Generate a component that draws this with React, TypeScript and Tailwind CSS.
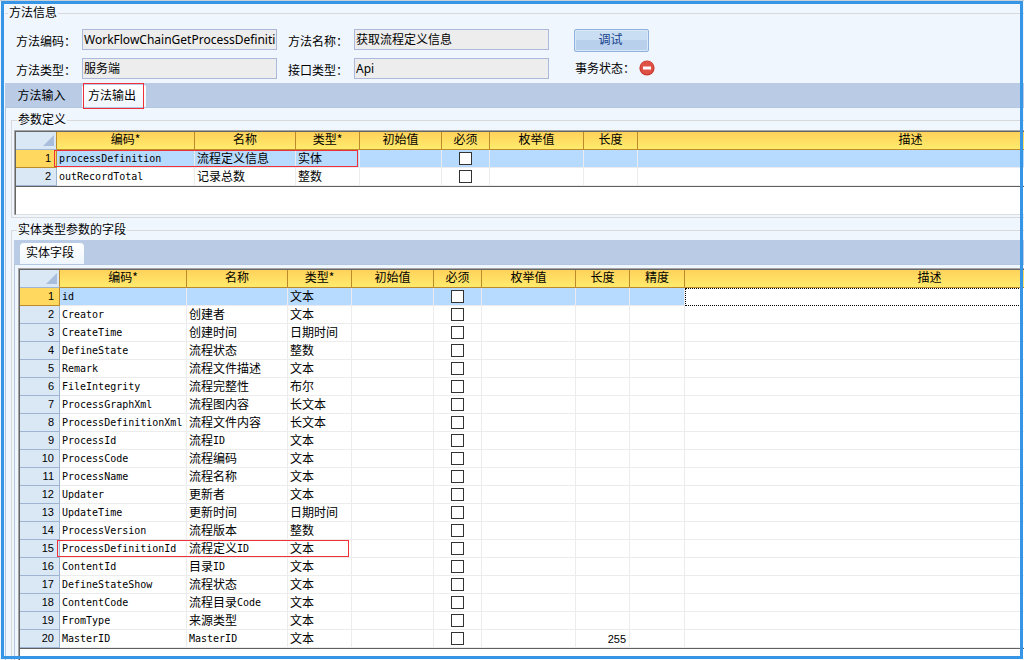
import type { ReactNode } from "react";

interface Row {
  cells: string[];
  marked?: boolean;
}

const paramHeaders = ["编码*", "名称", "类型*", "初始值", "必须", "枚举值", "长度", "描述"];
const paramWidths = ["w-[41px]", "w-[138px]", "w-[101px]", "w-[64px]", "w-[82px]", "w-[48px]", "w-[94px]", "w-[54px]", "w-[546px]"];
const paramRows: Row[] = [
  { cells: ["processDefinition", "流程定义信息", "实体", "", "", "", "", ""], marked: true },
  { cells: ["outRecordTotal", "记录总数", "整数", "", "", "", "", ""] },
];

const fieldHeaders = ["编码*", "名称", "类型*", "初始值", "必须", "枚举值", "长度", "精度", "描述"];
const fieldWidths = ["w-[40px]", "w-[127px]", "w-[101px]", "w-[64px]", "w-[82px]", "w-[48px]", "w-[94px]", "w-[54px]", "w-[55px]", "w-[490px]"];
const fields: [string, string, string, string?][] = [
  ["id", "", "文本"],
  ["Creator", "创建者", "文本"],
  ["CreateTime", "创建时间", "日期时间"],
  ["DefineState", "流程状态", "整数"],
  ["Remark", "流程文件描述", "文本"],
  ["FileIntegrity", "流程完整性", "布尔"],
  ["ProcessGraphXml", "流程图内容", "长文本"],
  ["ProcessDefinitionXml", "流程文件内容", "长文本"],
  ["ProcessId", "流程ID", "文本"],
  ["ProcessCode", "流程编码", "文本"],
  ["ProcessName", "流程名称", "文本"],
  ["Updater", "更新者", "文本"],
  ["UpdateTime", "更新时间", "日期时间"],
  ["ProcessVersion", "流程版本", "整数"],
  ["ProcessDefinitionId", "流程定义ID", "文本"],
  ["ContentId", "目录ID", "文本"],
  ["DefineStateShow", "流程状态", "文本"],
  ["ContentCode", "流程目录Code", "文本"],
  ["FromType", "来源类型", "文本"],
  ["MasterID", "MasterID", "文本", "255"],
];
const fieldRows: Row[] = fields.map(([code, name, type, length]) => ({
  cells: [code, name, type, "", "", "", length ?? "", "", ""],
  marked: code === "ProcessDefinitionId",
}));

/* Latin runs are set in a half-width face beside the full-width Chinese. */
function Mixed({ text }: { text: string }) {
  return (
    <>
      {text.split(/([A-Za-z0-9]+)/).filter(Boolean).map((part, i) =>
        /^[A-Za-z0-9]/.test(part) ? (
          <span key={i} className="align-[1px] font-['DejaVu_Sans_Mono',monospace] text-[10px] leading-3">{part}</span>
        ) : (
          <span key={i}>{part}</span>
        ),
      )}
    </>
  );
}

interface GridProps {
  label: string;
  headers: string[];
  widths: string[];
  rows: Row[];
  markClass: string;
  focusLast?: boolean;
}

function DataGrid({ label, headers, widths, rows, markClass, focusLast }: GridProps) {
  return (
    <table aria-label={label} className="w-max table-fixed border-separate border-spacing-0 border-b border-[#606060] text-xs leading-4">
      <colgroup>
        {widths.map((w, i) => <col key={i} className={w} />)}
      </colgroup>
      <thead>
        <tr className="h-[18px]">
          <th className="border-r border-b border-r-[#bf8a2c] border-b-[#9fb4d0] bg-[#dae7f5] p-0">
            <svg className="mr-[2px] ml-auto h-[11px] w-[11px]" viewBox="0 0 11 11" aria-hidden="true">
              <path d="M11 0V11H0Z" fill="#a9bedd" />
            </svg>
          </th>
          {headers.map((h) => (
            <th key={h} className="border-r border-b border-[#bf8a2c] bg-linear-to-b from-[#ffd25a] to-[#ffeb6c] p-0 text-center font-normal">
              <span className="block h-[17px] leading-[14px]">{h}</span>
            </th>
          ))}
        </tr>
      </thead>
      <tbody>
        {rows.map((row, r) => (
          <tr key={r} className="h-[18px]">
            <th
              scope="row"
              className={
                r === 0
                  ? "border-r border-b border-[#bf8a2c] bg-[#ffd95f] p-0 pr-[5px] text-right font-normal"
                  : "border-r border-b border-[#9fb4d0] bg-[#dae7f5] p-0 pr-[5px] text-right font-normal"
              }
            >
              <span className="block h-[17px] font-['Liberation_Sans',sans-serif] text-[11px] leading-[17px]">{r + 1}</span>
            </th>
            {row.cells.map((cell, i) => {
              const focused = focusLast && r === 0 && i === row.cells.length - 1;
              return (
                <td
                  key={i}
                  className={
                    focused
                      ? "border border-dotted border-black bg-white p-0"
                      : r === 0
                        ? "relative border-r border-b border-[#ececf0] bg-[#b7daff] p-0"
                        : "relative border-r border-b border-[#ececec] bg-white p-0"
                  }
                >
                  {row.marked && i === 0 && <span className={markClass} />}
                  {headers[i] === "必须" ? (
                    <input
                      type="checkbox"
                      aria-label={`${row.cells[0]} 必须`}
                      className="mx-auto block h-[13px] w-[13px] appearance-none border border-[#333] bg-white"
                    />
                  ) : headers[i] === "长度" ? (
                    <span className="block h-4 pr-[3px] text-right font-['Liberation_Sans',sans-serif] text-[11px] whitespace-nowrap">
                      {cell}
                    </span>
                  ) : (
                    <span className="block h-4 pl-[2px] leading-[14px] whitespace-nowrap">
                      <Mixed text={cell} />
                    </span>
                  )}
                </td>
              );
            })}
          </tr>
        ))}
      </tbody>
    </table>
  );
}

function Field({ id, label, value }: { id: string; label: string; value: string }) {
  return (
    <div className="flex h-[21px] items-center">
      <label htmlFor={id} className="w-[66px] shrink-0 pt-[3px] whitespace-nowrap">{label}</label>
      <input
        id={id}
        readOnly
        defaultValue={value}
        className="h-[21px] w-[195px] border border-[#adb9db] bg-[#ededed] px-px pb-px font-['Noto_Sans','Noto_Sans_CJK_SC',sans-serif] text-xs"
      />
    </div>
  );
}

function Group({ title, className, legendClass, children }: { title: string; className: string; legendClass: string; children: ReactNode }) {
  return (
    <fieldset className={className}>
      <legend className={legendClass}>{title}</legend>
      {children}
    </fieldset>
  );
}

export default function App() {
  return (
    <main
      lang="zh-CN"
      className="relative flex h-screen flex-col overflow-hidden bg-[#eff6fe] pt-[5px] pl-[5px] font-['Noto_Sans_CJK_SC',sans-serif] text-xs leading-4 text-black"
    >
      <Group title="方法信息" className="min-w-0 shrink-0 border-t border-[#d9d9dc] pb-1" legendClass="ml-[3px] h-4 px-px leading-[14px]">
        <div className="flex pt-2 pl-[11px]">
          <div className="flex flex-col gap-2">
            <Field id="method-code" label="方法编码：" value="WorkFlowChainGetProcessDefinition" />
            <Field id="method-type" label="方法类型：" value="服务端" />
          </div>
          <div className="ml-[11px] flex flex-col gap-2">
            <Field id="method-name" label="方法名称：" value="获取流程定义信息" />
            <Field id="api-type" label="接口类型：" value="Api" />
          </div>
          <div className="-mb-2 ml-[25px] flex flex-col items-start gap-2">
            <button
              type="button"
              className="h-[23px] w-[75px] rounded-xs border border-[#8fb1dc] bg-linear-to-b from-[#cadef3] from-50% to-[#b9d0ec] to-50% pr-[2px] pb-[3px] text-[#15428b] shadow-[inset_0_0_0_1px_#d8e8f8]"
            >
              调试
            </button>
            <div className="flex h-4 items-center gap-1">
              <span className="w-[61px] pl-px whitespace-nowrap">事务状态：</span>
              <svg className="h-4 w-4" viewBox="0 0 16 16" role="img" aria-label="未启用">
                <circle cx="8" cy="8" r="7.6" fill="#c9392d" />
                <circle cx="8" cy="7.6" r="6.6" fill="#df5145" />
                <rect x="4" y="6.5" width="8" height="3" fill="#fff" />
              </svg>
            </div>
          </div>
        </div>
      </Group>

      <nav className="flex h-[25px] shrink-0 border-b border-[#b3c8e0] bg-[#bacce5]">
        <button type="button" className="w-[77px] pr-1 pb-px text-center">方法输入</button>
        <button type="button" className="relative mt-[2px] w-[64px] rounded-t-xs bg-linear-to-b from-white to-[#eff6fe] pr-1 pb-[3px] text-center">
          方法输出
          <span className="absolute -top-[2px] left-[1px] h-[26px] w-[61px] border border-[#f03038]" />
        </button>
      </nav>

      <section className="flex min-h-0 flex-1 flex-col border-l border-[#b3c8e0] pt-1 pl-[5px]">
        <Group
          title="参数定义"
          className="min-w-0 shrink-0 border-y border-l border-[#d9d9dc] pt-[2px] pb-[2px] pl-[2px]"
          legendClass="ml-[3px] h-4 px-px leading-[14px]"
        >
          <div className="border-t border-l border-[#a6a6a6]">
            <div className="h-[84px] overflow-hidden border-t border-b border-l border-t-[#666] border-b-[#dedede] border-l-[#666] bg-white">
              <DataGrid
                label="参数定义"
                headers={paramHeaders}
                widths={paramWidths}
                rows={paramRows}
                markClass="absolute top-0 -left-[3px] z-10 h-[17px] w-[304px] border border-[#f03038]"
              />
            </div>
          </div>
        </Group>

        <Group
          title="实体类型参数的字段"
          className="mt-1 flex min-h-0 min-w-0 flex-1 flex-col border-t border-l border-[#d9d9dc] pt-[2px] pl-[2px]"
          legendClass="ml-[3px] h-4 px-px leading-[14px]"
        >
          <nav className="flex h-[25px] shrink-0 border-b border-[#b3c8e0] bg-[#bacce5] pl-[6px]">
            <button type="button" className="mt-[3px] w-[64px] rounded-t-sm bg-linear-to-b from-white to-[#eff6fe] pr-1 pb-1 text-center">
              实体字段
            </button>
          </nav>
          <div className="flex min-h-0 flex-1 flex-col border-l border-[#b3c8e0] pt-[3px] pl-[3px]">
            <div className="flex min-h-0 flex-1 flex-col border-t border-l border-[#a6a6a6]">
              <div className="min-h-0 flex-1 overflow-hidden border-t border-l border-[#666] bg-white">
                <DataGrid
                  label="实体字段"
                  headers={fieldHeaders}
                  widths={fieldWidths}
                  rows={fieldRows}
                  markClass="absolute top-0 -left-[3px] z-10 h-[17px] w-[292px] border border-[#f03038]"
                  focusLast
                />
              </div>
            </div>
          </div>
        </Group>
      </section>

      <div className="pointer-events-none absolute inset-x-0 top-0 z-20 h-px bg-[#c8d0da]" />
      <div className="pointer-events-none absolute top-px right-px bottom-px left-px z-20 border-3 border-[#3795e6]" />
    </main>
  );
}
